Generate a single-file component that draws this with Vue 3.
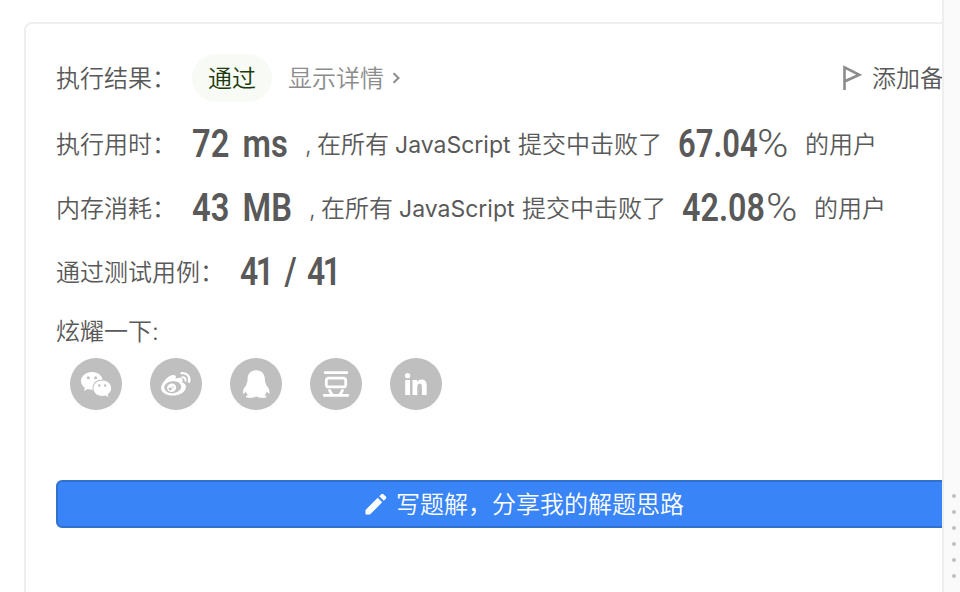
<script setup>
const stats = [
  { name: 'runtime', label: '执行用时：', value: '72 ms', percent: '67.04' },
  { name: 'memory', label: '内存消耗：', value: '43 MB', percent: '42.08' },
]
</script>

<template>
  <div class="page">
    <main class="panel">
      <section class="card">
        <div class="row result">
          <span class="label">执行结果：</span>
          <span class="badge">通过</span>
          <a class="detail">
            <span>显示详情</span>
            <svg width="8" height="12" viewBox="0 0 8 12">
              <path d="M1.5 1.2 6.5 6l-5 4.8" fill="none" stroke="#8c8c8c" stroke-width="2" />
            </svg>
          </a>
          <a class="note">
            <svg width="20" height="26" viewBox="0 0 20 26">
              <path d="M2.500 25V2.400L17.300 9.800 2.500 16.500" fill="none" stroke="#8c8c8c" stroke-width="2.600" />
            </svg>
            <span>添加备注</span>
          </a>
        </div>

        <div v-for="s in stats" :key="s.name" class="row stat" :class="s.name">
          <span class="label">{{ s.label }}</span>
          <span class="value"><b>{{ s.value }}</b></span>
          <span class="comma">,</span>
          <span class="scope">在所有</span>
          <span class="lang">JavaScript</span>
          <span class="beat">提交中击败了</span>
          <span class="percent"><b>{{ s.percent }}</b></span>
          <span class="sign"><i>%</i></span>
          <span>的用户</span>
        </div>

        <div class="row cases">
          <span class="label">通过测试用例：</span>
          <span class="value"><b>41 / 41</b></span>
        </div>

        <div class="share-title">炫耀一下:</div>
        <div class="share">
          <a class="social">
            <svg width="52" height="52" viewBox="0 0 52 52">
              <path d="M22 14c-6.100 0-11 4-11 9 0 2.800 1.500 5.200 3.900 6.900L14 33l3.800-2c1.300.4 2.700.7 4.200.7h.8c-1.400-5.400 3.100-10.400 9.900-10.200C31.700 17.100 27.400 14 22 14z" fill="#fff" />
              <path d="M32.300 22.500c-5 0-8.900 3.400-8.900 7.700s3.900 7.700 8.900 7.700c1.200 0 2.200-.2 3.200-.5l3 1.700-.8-2.900c2.200-1.400 3.500-3.600 3.500-6 0-4.300-3.900-7.700-8.900-7.700z" fill="#fff" />
              <g fill="#bfbfbf">
                <circle cx="18.300" cy="19.800" r="1.500" /><circle cx="25.600" cy="19.800" r="1.500" />
                <circle cx="29.300" cy="27.500" r="1.200" /><circle cx="35.200" cy="27.500" r="1.200" />
              </g>
            </svg>
          </a>
          <a class="social">
            <svg width="52" height="52" viewBox="0 0 52 52">
              <path d="M24.500 17.300c-3.500-1-7.200 2.300-9.800 5.300-2.300 2.700-3.600 5.200-3.600 7.600 0 4.600 5.600 7.300 11.600 7.300 7.800 0 13.300-4.400 13.300-8.600 0-2.500-2-3.900-3.800-4.500.8-2 .6-3.500-.7-4.200-1.300-.8-3.600-.4-6 .6.7-2 .3-3.200-1-3.500z" fill="#fff" />
              <ellipse cx="22.700" cy="29.200" rx="8.500" ry="6" transform="rotate(-6 22.700 29.200)" fill="#bfbfbf" />
              <ellipse cx="21.600" cy="29.700" rx="4.600" ry="4.200" transform="rotate(-20 21.600 29.700)" fill="#fff" />
              <ellipse cx="20.300" cy="30.900" rx="1.700" ry="1.400" fill="#bfbfbf" />
              <circle cx="23" cy="29" r=".8" fill="#bfbfbf" />
              <g fill="none" stroke="#fff" stroke-linecap="round">
                <path d="M31.600 15.200c5-.9 9 3.300 7.500 8.600" stroke-width="2.300" />
                <path d="M32.300 19.300c2.200-.2 3.700 1.300 3.200 3.500" stroke-width="2" />
              </g>
            </svg>
          </a>
          <a class="social">
            <svg width="52" height="52" viewBox="0 0 52 52">
              <path d="M26.200 12.300c-5.500 0-8.700 4-8.700 8.900v2.400c-.9 1-1.200 2-1 3.200-2.300 2.700-3.800 5.600-3.500 8 .2 1.600 1.300.9 2.700-1.200.5 1.500 1.200 2.700 2.300 3.700-1.500.4-2 1-1.800 1.700.5 1.200 6.800 1.400 9.700-.5h.8c2.900 1.900 9.200 1.700 9.700.5.200-.7-.3-1.300-1.800-1.700 1.100-1 1.800-2.200 2.300-3.700 1.400 2.100 2.300 2.700 2.500 1.100.4-2.600-1.200-5.300-3.500-7.900.2-1.200-.1-2.200-1-3.200v-2.400c0-4.900-3.200-8.900-8.700-8.900z" fill="#fff" />
            </svg>
          </a>
          <a class="social">
            <svg width="52" height="52" viewBox="0 0 52 52">
              <g fill="none" stroke="#fff" stroke-width="2.800" stroke-linecap="round">
                <path d="M15.200 14.600h21.600M14.200 37.400h23.600M19.600 32.500l2.300 4M32.400 32.500l-2.300 4" />
                <rect x="16.300" y="20.200" width="19.400" height="8.700" rx="2.500" />
              </g>
            </svg>
          </a>
          <a class="social">
            <svg width="52" height="52" viewBox="0 0 52 52">
              <g fill="#fff">
                <circle cx="17.600" cy="17.700" r="2.600" />
                <path d="M15.200 22h4.800v15h-4.800zM22.500 22h4.500v2c.9-1.500 2.500-2.400 4.500-2.400 4 0 5.200 2.600 5.200 6.400v9h-4.800v-8c0-2-.3-3.400-2-3.400s-2.600 1.400-2.600 3.400v8h-4.800z" />
              </g>
            </svg>
          </a>
        </div>

        <button class="write">
          <svg width="22" height="22" viewBox="0 0 22 22">
            <path d="M.5 17v4.500H5L17.200 9.300l-4.500-4.500zM20.800 5.700a1.500 1.500 0 0 0 0-2.100l-2.400-2.400a1.500 1.500 0 0 0-2.100 0l-2 2 4.500 4.500z" fill="#fff" />
          </svg>
          <span>写题解，分享我的解题思路</span>
        </button>
      </section>
    </main>
    <aside class="splitter">
      <i v-for="n in 6" :key="n" class="dot"></i>
    </aside>
  </div>
</template>

<style>
body {
  margin: 0;
  overflow: hidden;
}
</style>

<style scoped>
.page {
  display: flex;
  width: 960px;
  height: 592px;
  overflow: hidden;
  background: #fff;
  color: #595959;
  font-family: Inter, 'Noto Sans CJK SC', sans-serif;
  font-size: 24px;
  font-weight: 350;
  line-height: 36px;
  white-space: nowrap;
}
.panel {
  box-sizing: border-box;
  width: 942px;
  padding: 22px 0 0 24px;
  overflow: hidden;
}
.card {
  box-sizing: border-box;
  width: 1000px;
  height: 640px;
  padding: 30px;
  border: 2px solid #eee;
  border-radius: 8px;
}
.row {
  display: flex;
  align-items: center;
  height: 64px;
}
.row > span:not(.value, .percent, .sign, .badge),
.detail span,
.note span,
.write span {
  padding-top: 2px;
}
.result {
  height: 48px;
  margin-bottom: 10px;
}
.label {
  flex: none;
  width: 136px;
}
.badge {
  width: 80px;
  height: 48px;
  border-radius: 24px;
  background: #f8faf5;
  color: #1c3a0d;
  line-height: 50px;
  text-align: center;
}
.detail {
  display: flex;
  align-items: center;
  gap: 8px;
  margin-left: 16px;
  color: #8c8c8c;
}
.note {
  display: flex;
  align-items: center;
  gap: 10px;
  margin-left: 442px;
}
.value,
.percent,
.sign {
  flex: none;
  font-family: Roboto, sans-serif;
  font-size: 38px;
}
.value b,
.percent b,
.sign i {
  display: inline-block;
  font-style: normal;
  font-weight: 600;
  transform: scaleX(0.86);
  transform-origin: left;
}
.value b {
  word-spacing: 6px;
}
.percent b {
  transform: scaleX(0.815);
}
.sign i {
  font-weight: 300;
  transform: scaleX(1.12);
}
.value {
  width: 113px;
}
.comma {
  width: 12px;
}
.scope {
  width: 78px;
}
.lang {
  width: 123px;
  font-size: 23px;
  font-weight: 400;
}
.beat {
  width: 160px;
}
.percent {
  width: 79px;
}
.sign {
  width: 48px;
}
.memory .value {
  width: 117px;
}
.memory .percent {
  width: 84px;
}
.memory .percent b {
  transform: scaleX(0.85);
}
.cases .label {
  width: 184px;
}
.cases .value b {
  letter-spacing: -3px;
  word-spacing: 9px;
  transform: scaleX(0.84);
}
.share-title {
  margin-top: -2px;
  line-height: 60px;
}
.share {
  display: flex;
  gap: 28px;
  padding-left: 14px;
  margin-top: -4px;
}
.social {
  width: 52px;
  height: 52px;
  border-radius: 50%;
  background: #bfbfbf;
}
.social svg {
  display: block;
}
.write {
  box-sizing: border-box;
  display: flex;
  align-items: center;
  gap: 9px;
  width: 936px;
  height: 48px;
  margin-top: 70px;
  padding: 0 0 0 307px;
  border: 2px solid #3172cc;
  border-radius: 6px;
  background: #3984f7;
  color: #fff;
  font: inherit;
}
.splitter {
  box-sizing: border-box;
  display: flex;
  flex-direction: column;
  align-items: center;
  gap: 12px;
  width: 18px;
  padding: 494px 0 0 4px;
  border-left: 2px solid #eee;
  background: #fafafa;
}
.dot {
  flex: none;
  width: 4px;
  height: 4px;
  border-radius: 50%;
  background: #bfbfbf;
}
</style>
